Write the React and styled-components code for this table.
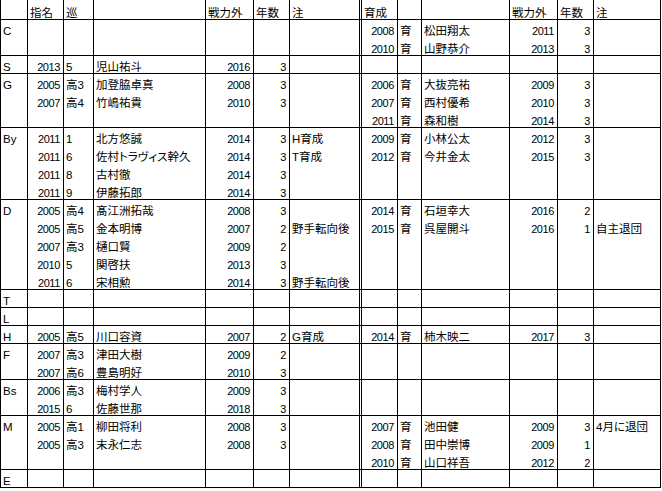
import React from "react";
import styled, { createGlobalStyle } from "styled-components";

const GlobalStyle = createGlobalStyle`
  html, body {
    margin: 0;
    padding: 0;
    background: #ffffff;
  }
  body {
    font-family: "Liberation Sans", "Noto Sans CJK JP", sans-serif;
    color: #000000;
  }
`;

const Sheet = styled.div`
  width: 661px;
  box-sizing: border-box;
  border-left: 1px solid #000;
  background: #fff;
`;

const Row = styled.div`
  display: grid;
  grid-template-columns: 27px 36px 30px 112px 48px 36px 72px 36px 24px 88px 48px 36px 67px;
`;

const Cell = styled.div`
  height: ${(p) => (p.$head ? 20 : 18)}px;
  box-sizing: border-box;
  border-right: ${(p) => (p.$double ? "3px double #000" : "1px solid #000")};
  border-bottom: ${(p) => (p.$end ? "1px solid #000" : "0")};
  padding-top: ${(p) => (p.$head ? 7 : 5)}px;
  padding-left: ${(p) => (p.$align === "right" ? 0 : 2)}px;
  padding-right: ${(p) => (p.$align === "right" ? 3 : 0)}px;
  text-align: ${(p) => p.$align};
  font-size: 11.5px;
  line-height: 12px;
  white-space: nowrap;
  font-feature-settings: "palt";
`;

const NumCell = styled(Cell)`
  font-size: 11px;
  letter-spacing: -0.4px;
`;

const COLS = [
  { align: "left" },
  { align: "right", num: true },
  { align: "left" },
  { align: "left" },
  { align: "right", num: true },
  { align: "right", num: true },
  { align: "left", double: true },
  { align: "right", num: true },
  { align: "left" },
  { align: "left" },
  { align: "right", num: true },
  { align: "right", num: true },
  { align: "left" },
];

const HEADER = ["", "指名", "巡", "", "戦力外", "年数", "注", "育成", "", "", "戦力外", "年数", "注"];

const E6 = ["", "", "", "", "", ""];

const GROUPS = [
  {
    pos: "C",
    rows: [
      [null, ["2008", "育", "松田翔太", "2011", "3", ""]],
      [null, ["2010", "育", "山野恭介", "2013", "3", ""]],
    ],
  },
  { pos: "S", rows: [[["2013", "5", "児山祐斗", "2016", "3", ""], null]] },
  {
    pos: "G",
    rows: [
      [["2005", "高3", "加登脇卓真", "2008", "3", ""], ["2006", "育", "大抜亮祐", "2009", "3", ""]],
      [["2007", "高4", "竹嶋祐貴", "2010", "3", ""], ["2007", "育", "西村優希", "2010", "3", ""]],
      [null, ["2011", "育", "森和樹", "2014", "3", ""]],
    ],
  },
  {
    pos: "By",
    rows: [
      [["2011", "1", "北方悠誠", "2014", "3", "H育成"], ["2009", "育", "小林公太", "2012", "3", ""]],
      [["2011", "6", "佐村トラヴィス幹久", "2014", "3", "T育成"], ["2012", "育", "今井金太", "2015", "3", ""]],
      [["2011", "8", "古村徹", "2014", "3", ""], null],
      [["2011", "9", "伊藤拓郎", "2014", "3", ""], null],
    ],
  },
  {
    pos: "D",
    rows: [
      [["2005", "高4", "髙江洲拓哉", "2008", "3", ""], ["2014", "育", "石垣幸大", "2016", "2", ""]],
      [["2005", "高5", "金本明博", "2007", "2", "野手転向後"], ["2015", "育", "呉屋開斗", "2016", "1", "自主退団"]],
      [["2007", "高3", "樋口賢", "2009", "2", ""], null],
      [["2010", "5", "関啓扶", "2013", "3", ""], null],
      [["2011", "6", "宋相勲", "2014", "3", "野手転向後"], null],
    ],
  },
  { pos: "T", rows: [[null, null]] },
  { pos: "L", rows: [[null, null]] },
  {
    pos: "H",
    rows: [[["2005", "高5", "川口容資", "2007", "2", "G育成"], ["2014", "育", "柿木映二", "2017", "3", ""]]],
  },
  {
    pos: "F",
    rows: [
      [["2007", "高3", "津田大樹", "2009", "2", ""], null],
      [["2007", "高6", "豊島明好", "2010", "3", ""], null],
    ],
  },
  {
    pos: "Bs",
    rows: [
      [["2006", "高3", "梅村学人", "2009", "3", ""], null],
      [["2015", "6", "佐藤世那", "2018", "3", ""], null],
    ],
  },
  {
    pos: "M",
    rows: [
      [["2005", "高1", "柳田将利", "2008", "3", ""], ["2007", "育", "池田健", "2009", "3", "4月に退団"]],
      [["2005", "高3", "末永仁志", "2008", "3", ""], ["2008", "育", "田中崇博", "2009", "1", ""]],
      [null, ["2010", "育", "山口祥吾", "2012", "2", ""]],
    ],
  },
  { pos: "E", rows: [[null, null]] },
];

function SheetCell({ col, head, end, children }) {
  const Comp = col.num && !head ? NumCell : Cell;
  return (
    <Comp $align={head ? "left" : col.align} $double={col.double} $head={head} $end={end}>
      {children}
    </Comp>
  );
}

export default function App() {
  return (
    <>
      <GlobalStyle />
      <Sheet>
        <Row>
          {HEADER.map((h, i) => (
            <SheetCell key={i} col={COLS[i]} head end>
              {h}
            </SheetCell>
          ))}
        </Row>
        {GROUPS.map((g) =>
          g.rows.map(([l, r], ri) => {
            const end = ri === g.rows.length - 1;
            const values = [ri === 0 ? g.pos : "", ...(l || E6), ...(r || E6)];
            return (
              <Row key={g.pos + ri}>
                {values.map((v, i) => (
                  <SheetCell key={i} col={COLS[i]} end={end}>
                    {v}
                  </SheetCell>
                ))}
              </Row>
            );
          })
        )}
      </Sheet>
    </>
  );
}
